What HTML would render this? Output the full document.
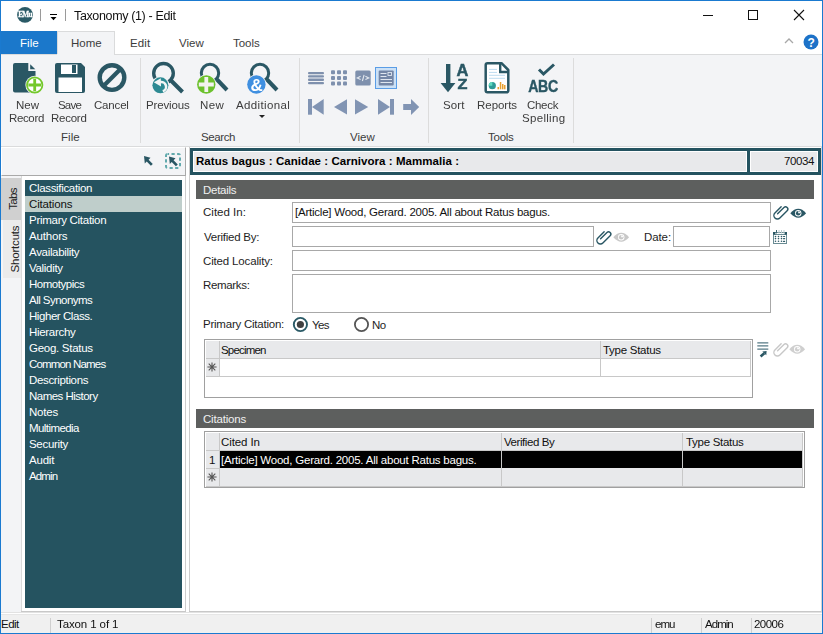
<!DOCTYPE html>
<html><head><meta charset="utf-8">
<style>
*{box-sizing:border-box;margin:0;padding:0}
html,body{width:823px;height:634px;overflow:hidden;background:#fff}
body{font-family:"Liberation Sans",sans-serif;font-size:11.5px;color:#000;position:relative;letter-spacing:-0.5px}
.a{position:absolute}
.t{position:absolute;white-space:nowrap;line-height:14px}
#win{position:absolute;left:0;top:0;width:823px;height:634px;border:1px solid #1a7ad0}
.rb{color:#3c3c3c}
.sep{position:absolute;width:1px;background:#dcdcdc}
.lst div{height:16px;line-height:16px;padding-left:4px;color:#fff;white-space:nowrap}
.fld{position:absolute;border:1px solid #a8a8a8;background:#fff}
.lbl{position:absolute;white-space:nowrap;line-height:14px;color:#1e1e1e}
.hdr{position:absolute;background:#5d5f5e;color:#f0f0f0;padding-left:7px;line-height:20px}
</style></head>
<body>
<!-- title bar -->
<div class="a" style="left:0;top:0;width:823px;height:31px;background:#fff"></div>
<svg class="a" style="left:17px;top:7px;will-change:transform" width="17" height="17" viewBox="0 0 17 17"><circle cx="8" cy="7.9" r="7.9" fill="#2a5a66"/><text x="8" y="10.4" font-family="Liberation Serif" font-size="7.6" font-weight="bold" fill="#fff" stroke="#fff" stroke-width="0.25" text-anchor="middle" letter-spacing="-0.8" transform="translate(8 0) scale(0.95 1) translate(-8 0)">EMu</text></svg>
<div class="a" style="left:40px;top:9px;width:1px;height:12px;background:#9a9a9a"></div>
<div class="a" style="left:50px;top:14px;width:7px;height:1px;background:#000"></div>
<svg class="a" style="left:50px;top:17px" width="7" height="4"><path d="M0.5 0H6.5L3.5 3.2Z" fill="#000"/></svg>
<div class="a" style="left:65px;top:9px;width:1px;height:12px;background:#9a9a9a"></div>
<div class="t" style="will-change:transform;left:74px;top:9px;font-size:12.5px;letter-spacing:-0.36px;color:#111">Taxonomy (1) - Edit</div>
<!-- window buttons -->
<div class="a" style="left:703px;top:15px;width:10px;height:1px;background:#111"></div>
<div class="a" style="left:748px;top:10px;width:10px;height:10px;border:1px solid #111"></div>
<svg class="a" style="left:793px;top:9px" width="12" height="12"><path d="M1 1L11 11M11 1L1 11" stroke="#111" stroke-width="1.1"/></svg>

<!-- ribbon tabs row -->
<div class="a" style="left:1px;top:31px;width:56px;height:23px;background:#1b78cb"></div>
<div class="t" style="left:20px;top:36px;color:#fff;letter-spacing:0.07px">File</div>
<div class="a" style="left:57px;top:31px;width:58px;height:24px;background:#f3f4f6;border:1px solid #dadbdc;border-bottom:none"></div>
<div class="t rb" style="left:71px;top:36px;letter-spacing:0.03px">Home</div>
<div class="t rb" style="left:130px;top:36px;letter-spacing:0.13px">Edit</div>
<div class="t rb" style="left:179px;top:36px;letter-spacing:0.00px">View</div>
<div class="t rb" style="left:233px;top:36px;letter-spacing:-0.05px">Tools</div>
<svg class="a" style="left:784px;top:37px" width="10" height="7"><path d="M1 6L5 2L9 6" stroke="#a8a8a8" stroke-width="1.3" fill="none"/></svg>
<svg class="a" style="left:803px;top:34px" width="16" height="16"><circle cx="8" cy="8" r="7.5" fill="#1d72c8"/><text x="8" y="12.5" font-family="Liberation Sans" font-size="12" font-weight="bold" fill="#fff" text-anchor="middle">?</text></svg>

<!-- ribbon body -->
<div class="a" style="left:1px;top:54px;width:821px;height:93px;background:#f3f4f6;border-top:1px solid #dadbdc;border-bottom:1px solid #dadbdc"></div>
<div class="a" style="left:57px;top:54px;width:57px;height:1px;background:#f3f4f6"></div>
<div class="sep" style="left:140px;top:58px;height:85px"></div>
<div class="sep" style="left:299px;top:58px;height:85px"></div>
<div class="sep" style="left:428px;top:58px;height:85px"></div>
<div class="sep" style="left:573px;top:58px;height:85px"></div>


<!-- ribbon icons -->
<svg class="a" style="left:0;top:54px;will-change:transform" width="600" height="70" viewBox="0 54 600 70">
 <!-- New record -->
 <path d="M13 65a2 2 0 0 1 2-2H28.3V71H35.5V90.5a2 2 0 0 1-2 2H15a2 2 0 0 1-2-2Z" fill="#2a5764"/>
 <path d="M30.2 64.2V69.3H35.3Z" fill="#2a5764"/>
 <circle cx="34.7" cy="85" r="9.3" fill="#f3f4f6"/>
 <circle cx="34.7" cy="85" r="7.7" fill="#fff" stroke="#74c82c" stroke-width="1.8"/>
 <path d="M34.7 78.7v12.6M28.4 85h12.6" stroke="#74c82c" stroke-width="2.8"/>
 <!-- Save -->
 <path d="M57 63H81L85 67V91a2 2 0 0 1-2 2H57a2 2 0 0 1-2-2V65a2 2 0 0 1 2-2Z" fill="#2a5764"/>
 <rect x="61" y="64.5" width="16.5" height="9.5" fill="#fff"/>
 <rect x="72" y="65" width="4" height="8" fill="#2a5764"/>
 <rect x="58.5" y="77.5" width="23.5" height="14.5" fill="#fff"/>
 <!-- Cancel -->
 <circle cx="112" cy="77.6" r="12.3" fill="none" stroke="#2a5764" stroke-width="4.4"/>
 <path d="M120.5 69L103.5 86" stroke="#2a5764" stroke-width="4.2"/>
 <!-- Previous -->
 <circle cx="163.5" cy="73.3" r="9.8" fill="none" stroke="#2a5764" stroke-width="3.4"/>
 <path d="M170.5 80L182.5 92" stroke="#2a5764" stroke-width="4"/>
 <circle cx="160.4" cy="85.3" r="9" fill="#f3f4f6"/>
 <circle cx="160.4" cy="85.3" r="8" fill="#2d8a93"/>
 <path d="M153.8 82.3L160.8 78.3L161 86.6Z" fill="#f3f6f6"/><path d="M160 82.2A4.6 4.6 0 0 1 162.8 91.2" fill="none" stroke="#f3f6f6" stroke-width="2.6"/>
 <!-- New search -->
 <circle cx="210" cy="73" r="8.7" fill="none" stroke="#2a5764" stroke-width="3"/>
 <path d="M217 79.5L227 90" stroke="#2a5764" stroke-width="4"/>
 <circle cx="206.3" cy="84.5" r="10" fill="#f3f4f6"/>
 <circle cx="206.3" cy="84.5" r="9.2" fill="#6cc12d"/>
 <path d="M206.3 77v15M198.8 84.5h15" stroke="#f3f3f0" stroke-width="3.8"/>
 <!-- Additional -->
 <circle cx="260" cy="73" r="8.7" fill="none" stroke="#2a5764" stroke-width="3"/>
 <path d="M267 79.5L277 90" stroke="#2a5764" stroke-width="4"/>
 <circle cx="256.4" cy="84.5" r="10" fill="#f3f4f6"/>
 <circle cx="256.4" cy="84.5" r="9.2" fill="#3f8fe0"/>
 <text x="256.4" y="90.8" font-family="Liberation Sans" font-weight="bold" font-size="17" fill="#fff" text-anchor="middle">&amp;</text>
 <!-- View: list -->
 <g fill="#7e90ad">
 <rect x="308" y="72" width="16" height="2.3" rx="1"/>
 <rect x="308" y="75.3" width="16" height="2.3" rx="1"/>
 <rect x="308" y="78.6" width="16" height="2.3" rx="1"/>
 <rect x="308" y="81.9" width="16" height="2.3" rx="1"/>
 <!-- grid -->
 <rect x="331" y="70.3" width="4" height="4" rx="1"/><rect x="337" y="70.3" width="4" height="4" rx="1"/><rect x="343" y="70.3" width="4" height="4" rx="1"/>
 <rect x="331" y="76" width="4" height="4" rx="1"/><rect x="337" y="76" width="4" height="4" rx="1"/><rect x="343" y="76" width="4" height="4" rx="1"/>
 <rect x="331" y="81.5" width="4" height="4" rx="1"/><rect x="337" y="81.5" width="4" height="4" rx="1"/><rect x="343" y="81.5" width="4" height="4" rx="1"/>
 <!-- code -->
 <rect x="355.3" y="70.4" width="15.4" height="15" rx="1.5"/>
 </g>
 <path d="M360.6 76.2L357.2 77.9L360.6 79.6M364.1 74.8L362.4 81M365.4 76.2L368.8 77.9L365.4 79.6" fill="none" stroke="#e3e8ef" stroke-width="1.1"/>
 <!-- selected detail view -->
 <rect x="375.5" y="67.5" width="21" height="21" fill="#cce1f6" stroke="#5a9de6" stroke-width="1"/>
 <rect x="378.7" y="70.4" width="15" height="15" rx="1" fill="#7486a6"/>
 <g stroke="#dfe6ef" stroke-width="1">
  <path d="M380.5 73.5h6M380.5 76.5h6M380.5 79.5h11.5M380.5 82.5h11.5"/>
 </g>
 <rect x="388" y="72.5" width="3.5" height="3" fill="none" stroke="#dfe6ef" stroke-width="0.9"/>
 <!-- nav -->
 <g fill="#8194b3">
 <rect x="308" y="99" width="4" height="15.7"/>
 <path d="M312 106.9L323.7 99V114.7Z"/>
 <path d="M334 106.9L347 99.3V114.5Z"/>
 <path d="M368.2 106.9L355 99.3V114.5Z"/>
 <path d="M390 106.9L378 99V114.7Z"/>
 <rect x="390" y="99" width="4" height="15.7"/>
 <path d="M403.2 104H411V99L419.2 107L411 115V110H403.2Z"/>
 </g>
 <!-- Sort -->
 <g fill="#2a5764">
 <rect x="446" y="64" width="4.4" height="20"/>
 <path d="M440.6 83H455.4L448 92.3Z"/>
 </g>
 <text x="462.3" y="75.6" font-family="Liberation Sans" font-weight="bold" font-size="16.8" fill="#2a5764" stroke="#2a5764" stroke-width="0.5" text-anchor="middle" transform="translate(462.3 0) scale(0.98 1) translate(-462.3 0)">A</text>
 <text x="462.3" y="89" font-family="Liberation Sans" font-weight="bold" font-size="15.5" fill="#2a5764" stroke="#2a5764" stroke-width="0.5" text-anchor="middle" transform="translate(462.3 0) scale(1.05 1) translate(-462.3 0)">Z</text>
 <!-- Reports -->
 <path d="M487.5 63.2H501.5L508.3 70V90.5a1.8 1.8 0 0 1-1.8 1.8H487.5a1.8 1.8 0 0 1-1.8-1.8V65a1.8 1.8 0 0 1 1.8-1.8Z" fill="#fff" stroke="#2a5764" stroke-width="2.5" stroke-linejoin="round"/>
 <path d="M500.2 63.5V72H508.5" fill="none" stroke="#2a5764" stroke-width="2.4"/>
 <g stroke="#bcdcf0" stroke-width="1"><path d="M489 69.4h8M489 72.4h8M489 75.3h16M489 78.3h16"/></g>
 <circle cx="492.3" cy="85.7" r="3.6" fill="#2d9a96"/>
 <path d="M492.3 85.7V82.1A3.6 3.6 0 0 0 488.7 85.7Z" fill="#5fd9be"/>
 <g fill="#e8a030"><rect x="497.5" y="87" width="1.5" height="2.3"/><rect x="499.8" y="82" width="1.5" height="7.3"/><rect x="502" y="84" width="1.5" height="5.3"/><rect x="504" y="85" width="1.5" height="4.3"/></g>
 <!-- Check spelling -->
 <path d="M539 69.5L543.5 74L554 64.5" fill="none" stroke="#2a5764" stroke-width="3"/>
 <text x="543" y="92" font-family="Liberation Sans" font-weight="bold" font-size="16.5" fill="#2a5764" stroke="#2a5764" stroke-width="0.4" text-anchor="middle" transform="translate(543 0) scale(0.86 1) translate(-543 0)">ABC</text>
</svg>

<!-- group labels -->
<div class="t rb" style="left:61px;top:130px;letter-spacing:0.03px">File</div>
<div class="t rb" style="left:201px;top:130px;letter-spacing:-0.40px">Search</div>
<div class="t rb" style="left:350px;top:130px;letter-spacing:0.03px">View</div>
<div class="t rb" style="left:488px;top:130px;letter-spacing:-0.25px">Tools</div>

<!-- button labels -->
<div class="t rb" style="left:16px;top:98px;letter-spacing:0.05px">New</div>
<div class="t rb" style="left:9px;top:111px;letter-spacing:-0.36px">Record</div>
<div class="t rb" style="left:58px;top:98px;letter-spacing:-0.80px">Save</div>
<div class="t rb" style="left:51px;top:111px;letter-spacing:-0.26px">Record</div>
<div class="t rb" style="left:94px;top:98px;letter-spacing:-0.18px">Cancel</div>
<div class="t rb" style="left:146px;top:98px;letter-spacing:-0.14px">Previous</div>
<div class="t rb" style="left:200px;top:98px;letter-spacing:0.40px">New</div>
<div class="t rb" style="left:236px;top:98px;letter-spacing:0.38px">Additional</div>
<svg class="a" style="left:259px;top:115px" width="6" height="3"><path d="M0 0H6L3 3Z" fill="#222"/></svg>
<div class="t rb" style="left:443px;top:98px;letter-spacing:0.13px">Sort</div>
<div class="t rb" style="left:477px;top:98px;letter-spacing:-0.03px">Reports</div>
<div class="t rb" style="left:527px;top:98px;letter-spacing:-0.30px">Check</div>
<div class="t rb" style="left:522px;top:111px;letter-spacing:0.31px">Spelling</div>

<!-- main area -->
<div class="a" style="left:1px;top:147px;width:821px;height:465px;background:#fff"></div>

<!-- left pane -->
<div class="a" style="left:1px;top:147px;width:185px;height:29px;background:#f3f4f6;border-top:1px solid #fff;border-left:1px solid #fff;border-right:1px solid #a9a9a9;border-bottom:1px solid #a9a9a9"></div>

<svg class="a" style="left:140px;top:150px" width="46" height="24" viewBox="140 150 46 24">
 <path d="M144 156L150.5 157.8L148.6 159.7L152.8 163.9L150.9 165.8L146.7 161.6L144.8 163.5Z" fill="#2a5764"/>
 <rect x="166" y="153.9" width="14" height="14" rx="1.5" fill="none" stroke="#62aaad" stroke-width="2" stroke-dasharray="3.2 2.4" stroke-dashoffset="1.6"/>
 <path d="M169 156.5L175.5 158.3L173.6 160.2L177.8 164.4L175.9 166.3L171.7 162.1L169.8 164Z" fill="#2a5764"/>
</svg>
<div class="a" style="left:1px;top:176px;width:20px;height:436px;background:#f3f4f6"></div>
<div class="a" style="left:1px;top:178px;width:20px;height:42px;background:#d0d0d0"></div>
<div class="a" style="left:3px;top:220px;width:18px;height:58px;background:#ebebeb"></div>
<div class="t" style="left:2px;top:192px;transform:rotate(-90deg);color:#222;letter-spacing:-0.7px">Tabs</div>
<div class="t" style="left:-8px;top:242px;transform:rotate(-90deg);color:#222;letter-spacing:-0.2px">Shortcuts</div>
<div class="a" style="left:21px;top:176px;width:1px;height:436px;background:#dadada"></div>
<div class="a" style="left:185px;top:176px;width:1px;height:436px;background:#cdcdcd"></div>
<div class="a" style="left:21px;top:611px;width:165px;height:1px;background:#c8c8c8"></div>
<div class="a lst" style="left:25px;top:180px;width:157px;height:428px;background:#255360">
 <div style=";letter-spacing:-0.33px">Classification</div>
 <div style="background:#bfcecb;color:#111;letter-spacing:-0.16px">Citations</div>
 <div style=";letter-spacing:-0.28px">Primary Citation</div>
 <div style=";letter-spacing:-0.18px">Authors</div>
 <div style=";letter-spacing:-0.32px">Availability</div>
 <div style=";letter-spacing:-0.30px">Validity</div>
 <div style=";letter-spacing:-0.47px">Homotypics</div>
 <div style=";letter-spacing:-0.53px">All Synonyms</div>
 <div style=";letter-spacing:-0.44px">Higher Class.</div>
 <div style=";letter-spacing:-0.31px">Hierarchy</div>
 <div style=";letter-spacing:-0.28px">Geog. Status</div>
 <div style=";letter-spacing:-0.83px">Common Names</div>
 <div style=";letter-spacing:-0.35px">Descriptions</div>
 <div style=";letter-spacing:-0.52px">Names History</div>
 <div style=";letter-spacing:-0.22px">Notes</div>
 <div style=";letter-spacing:-0.57px">Multimedia</div>
 <div style=";letter-spacing:-0.31px">Security</div>
 <div style=";letter-spacing:-0.22px">Audit</div>
 <div style=";letter-spacing:-0.85px">Admin</div>
</div>

<!-- right pane -->
<div class="a" style="left:189px;top:147px;width:1px;height:465px;background:#cdcdcd"></div><div class="a" style="left:189px;top:611px;width:633px;height:1px;background:#c8c8c8"></div>
<div class="a" style="left:821px;top:147px;width:1px;height:465px;background:#d4d4d4"></div>
<div class="a" style="left:190px;top:148px;width:631px;height:27px;background:#245360"></div>
<div class="a" style="left:193px;top:151px;width:554px;height:21px;background:#e8e9eb;border:1px solid #fff"></div>
<div class="a" style="left:750px;top:151px;width:68px;height:21px;background:#e8e9eb;border:1px solid #fff"></div>
<div class="t" style="left:196px;top:154px;font-weight:bold;letter-spacing:0.05px">Ratus bagus : Canidae : Carnivora : Mammalia :</div>
<div class="t" style="left:784px;top:154px;color:#111;letter-spacing:-0.40px">70034</div>

<div class="hdr" style="left:196px;top:180px;width:618px;height:19px;letter-spacing:-0.28px">Details</div>
<div class="lbl" style="left:203px;top:205px;letter-spacing:0.01px">Cited In:</div>
<div class="fld" style="left:292px;top:202px;width:479px;height:21px"></div>
<div class="t" style="left:295px;top:205px;color:#111;letter-spacing:-0.23px">[Article] Wood, Gerard. 2005. All about Ratus bagus.</div>
<div class="lbl" style="left:204px;top:230px;letter-spacing:-0.25px">Verified By:</div>
<div class="fld" style="left:292px;top:226px;width:302px;height:21px"></div>
<div class="lbl" style="left:644px;top:230px;letter-spacing:-0.10px">Date:</div>
<div class="fld" style="left:673px;top:226px;width:97px;height:21px"></div>
<div class="lbl" style="left:203px;top:254px;letter-spacing:-0.16px">Cited Locality:</div>
<div class="fld" style="left:292px;top:250px;width:479px;height:21px"></div>
<div class="lbl" style="left:203px;top:278px;letter-spacing:-0.33px">Remarks:</div>
<div class="fld" style="left:292px;top:274px;width:479px;height:39px"></div>
<div class="lbl" style="left:203px;top:317px;letter-spacing:-0.23px">Primary Citation:</div>
<div class="lbl" style="left:312px;top:318px;letter-spacing:-0.65px">Yes</div>
<div class="lbl" style="left:372px;top:318px;letter-spacing:-0.60px">No</div>
<svg class="a" style="left:292px;top:316px" width="17" height="17"><circle cx="8.4" cy="8.5" r="6.6" fill="#fff" stroke="#2a5a66" stroke-width="1.9"/><circle cx="8.4" cy="8.5" r="3.6" fill="#404040"/></svg>
<svg class="a" style="left:353px;top:316px" width="17" height="17"><circle cx="8.5" cy="8.5" r="6.6" fill="#fff" stroke="#555" stroke-width="1.8"/></svg>


<!-- form icons -->
<svg class="a" style="left:768.5px;top:200.5px" width="24" height="24" viewBox="0 0 24 24"><g transform="rotate(45 12 12) translate(0.2 0)"><path d="M7.5 7.5V16.3a3.5 3.5 0 0 0 7 0V6a2.25 2.25 0 0 0-4.5 0V15" fill="none" stroke="#2a5764" stroke-width="1.4" stroke-linecap="round"/></g></svg><svg class="a" style="left:790px;top:208px" width="17" height="11" viewBox="0 0 17 11"><path d="M0.3 5.3Q8.3 -3.6 16.1 5.3Q8.3 14.2 0.3 5.3Z" fill="#2a5764"/><circle cx="8.2" cy="5.3" r="3.2" fill="#fff"/><circle cx="8.2" cy="5.3" r="2.3" fill="#2a5764"/><path d="M8.2 5.3V3.3A2 2 0 0 1 10.2 5.3Z" fill="#fff"/></svg><svg class="a" style="left:591.5px;top:225.5px" width="24" height="24" viewBox="0 0 24 24"><g transform="rotate(45 12 12) translate(0.2 0)"><path d="M7.5 7.5V16.3a3.5 3.5 0 0 0 7 0V6a2.25 2.25 0 0 0-4.5 0V15" fill="none" stroke="#2a5764" stroke-width="1.4" stroke-linecap="round"/></g></svg><svg class="a" style="left:613px;top:232px" width="17" height="11" viewBox="0 0 17 11"><path d="M0.3 5.3Q8.3 -3.6 16.1 5.3Q8.3 14.2 0.3 5.3Z" fill="#c8c8c8"/><circle cx="8.2" cy="5.3" r="3.2" fill="#fff"/><circle cx="8.2" cy="5.3" r="2.3" fill="#c8c8c8"/><path d="M8.2 5.3V3.3A2 2 0 0 1 10.2 5.3Z" fill="#fff"/></svg><svg class="a" style="left:772px;top:229px" width="16" height="16" viewBox="0 0 16 16"><rect x="1.5" y="3.5" width="13" height="11" fill="#fff" stroke="#6a8c94" stroke-width="1"/><path d="M1 5.5H15" stroke="#6a8c94" stroke-width="1"/><rect x="1" y="3" width="2.4" height="2.6" fill="#2a5764"/><rect x="12.6" y="3" width="2.4" height="2.6" fill="#2a5764"/><rect x="4" y="1" width="1" height="3.4" fill="#3d6570"/><rect x="6.5" y="1" width="1" height="3.4" fill="#b9cace"/><rect x="9" y="1" width="1" height="3.4" fill="#b9cace"/><rect x="11.5" y="1" width="1" height="3.4" fill="#b9cace"/><g fill="#2f5b67"><circle cx="3.5" cy="7.5" r="0.8"/><circle cx="6.5" cy="7.5" r="0.8"/><circle cx="9.5" cy="7.5" r="0.8"/><rect x="11" y="6.9" width="2.2" height="1.2" rx="0.5"/><circle cx="3.5" cy="9.6" r="0.8"/><circle cx="6.5" cy="9.6" r="0.8"/><circle cx="9.5" cy="9.6" r="0.8"/><rect x="11" y="9.0" width="2.2" height="1.2" rx="0.5"/><circle cx="3.5" cy="12.3" r="0.8"/><circle cx="6.5" cy="12.3" r="0.8"/><circle cx="9.5" cy="12.3" r="0.8"/><rect x="11" y="11.700000000000001" width="2.2" height="1.2" rx="0.5"/></g></svg><svg class="a" style="left:756px;top:341px" width="14" height="17" viewBox="0 0 14 17"><g stroke="#557a85" stroke-width="1.2"><path d="M1.3 1.9h11M1.3 4.9h11M1.3 8.2h11"/></g><path d="M4.6 15.4L8.3 12.2" stroke="#2a5764" stroke-width="2.6"/><path d="M6.3 10.4L10.6 10.1L10.3 14.2Z" fill="#2a5764"/></svg><svg class="a" style="left:768.5px;top:337.5px" width="24" height="24" viewBox="0 0 24 24"><g transform="rotate(45 12 12) translate(0.2 0)"><path d="M7.5 7.5V16.3a3.5 3.5 0 0 0 7 0V6a2.25 2.25 0 0 0-4.5 0V15" fill="none" stroke="#c8c8c8" stroke-width="1.4" stroke-linecap="round"/></g></svg><svg class="a" style="left:789px;top:344px" width="17" height="11" viewBox="0 0 17 11"><path d="M0.3 5.3Q8.3 -3.6 16.1 5.3Q8.3 14.2 0.3 5.3Z" fill="#cfcfcf"/><circle cx="8.2" cy="5.3" r="3.2" fill="#fff"/><circle cx="8.2" cy="5.3" r="2.3" fill="#cfcfcf"/><path d="M8.2 5.3V3.3A2 2 0 0 1 10.2 5.3Z" fill="#fff"/></svg>
<!-- specimen grid -->
<div class="a" style="left:204px;top:339px;width:549px;height:59px;border:1px solid #a0a0a0;background:#fff"></div>
<div class="a" style="left:206px;top:341px;width:545px;height:36px;border-right:1px solid #c8c8c8"></div>
<div class="a" style="left:206px;top:341px;width:544px;height:18px;background:#e8e9eb;border-bottom:1px solid #c8c8c8"></div>
<div class="a" style="left:206px;top:359px;width:13px;height:18px;background:#e8e9eb;border-bottom:1px solid #c8c8c8"></div>
<div class="a" style="left:219px;top:359px;width:531px;height:18px;border-bottom:1px solid #c8c8c8"></div>
<div class="a" style="left:219px;top:341px;width:1px;height:36px;background:#c8c8c8"></div>
<div class="a" style="left:600px;top:341px;width:1px;height:36px;background:#c8c8c8"></div>
<div class="t" style="left:221px;top:343px;color:#111;letter-spacing:-0.81px">Specimen</div>
<div class="t" style="left:603px;top:343px;color:#111;letter-spacing:-0.27px">Type Status</div>
<svg class="a" style="left:207px;top:362px" width="10" height="10" viewBox="-5 -5 10 10"><path d="M0 -4.6V4.6M-4.6 0H4.6M-3.3 -3.3L3.3 3.3M-3.3 3.3L3.3 -3.3" stroke="#555" stroke-width="1.1"/></svg>

<!-- citations -->
<div class="hdr" style="left:196px;top:409px;width:618px;height:19px;line-height:21px;letter-spacing:-0.19px">Citations</div>
<div class="a" style="left:204px;top:431px;width:601px;height:57px;border:1px solid #a0a0a0;background:#fff"></div>
<div class="a" style="left:206px;top:433px;width:597px;height:54px;background:#e8e9eb;border-right:1px solid #c8c8c8"></div>
<div class="a" style="left:206px;top:450px;width:596px;height:1px;background:#c8c8c8"></div>
<div class="a" style="left:220px;top:451px;width:582px;height:17px;background:#000"></div>
<div class="a" style="left:206px;top:468px;width:14px;height:1px;background:#c8c8c8"></div>
<div class="a" style="left:206px;top:486px;width:596px;height:1px;background:#c8c8c8"></div>
<div class="a" style="left:219px;top:433px;width:1px;height:54px;background:#c8c8c8"></div>
<div class="a" style="left:501px;top:433px;width:1px;height:54px;background:#c8c8c8"></div>
<div class="a" style="left:682px;top:433px;width:1px;height:54px;background:#c8c8c8"></div>
<div class="t" style="left:221px;top:435px;color:#111;letter-spacing:-0.09px">Cited In</div>
<div class="t" style="left:504px;top:435px;color:#111;letter-spacing:-0.43px">Verified By</div>
<div class="t" style="left:686px;top:435px;color:#111;letter-spacing:-0.29px">Type Status</div>
<div class="t" style="left:209px;top:453px;color:#111;letter-spacing:0.00px">1</div>
<div class="t" style="left:221px;top:453px;color:#fff;letter-spacing:-0.22px">[Article] Wood, Gerard. 2005. All about Ratus bagus.</div>
<svg class="a" style="left:207px;top:472px" width="10" height="10" viewBox="-5 -5 10 10"><path d="M0 -4.6V4.6M-4.6 0H4.6M-3.3 -3.3L3.3 3.3M-3.3 3.3L3.3 -3.3" stroke="#555" stroke-width="1.1"/></svg>

<!-- status bar -->
<div class="a" style="left:1px;top:612px;width:821px;height:21px;background:#f0f0f0;border-top:1px solid #e2e2e2"></div><div class="a" style="left:1px;top:613px;width:821px;height:1px;background:#fff"></div><div class="a" style="left:1px;top:614px;width:821px;height:1px;background:#e6e6e6"></div>
<div class="t" style="left:1px;top:617px;color:#111;letter-spacing:-0.53px">Edit</div>
<div class="a" style="left:50px;top:618px;width:1px;height:15px;background:#cfcfcf"></div>
<div class="t" style="left:57px;top:617px;color:#111;letter-spacing:-0.11px">Taxon 1 of 1</div>
<div class="a" style="left:651px;top:618px;width:1px;height:15px;background:#cfcfcf"></div>
<div class="t" style="left:655px;top:617px;color:#111;letter-spacing:-1.00px">emu</div>
<div class="a" style="left:701px;top:618px;width:1px;height:15px;background:#cfcfcf"></div>
<div class="t" style="left:705px;top:617px;color:#111;letter-spacing:-0.97px">Admin</div>
<div class="a" style="left:751px;top:618px;width:1px;height:15px;background:#cfcfcf"></div>
<div class="t" style="left:754px;top:617px;color:#111;letter-spacing:-0.53px">20006</div>

<div id="win"></div>
</body></html>
